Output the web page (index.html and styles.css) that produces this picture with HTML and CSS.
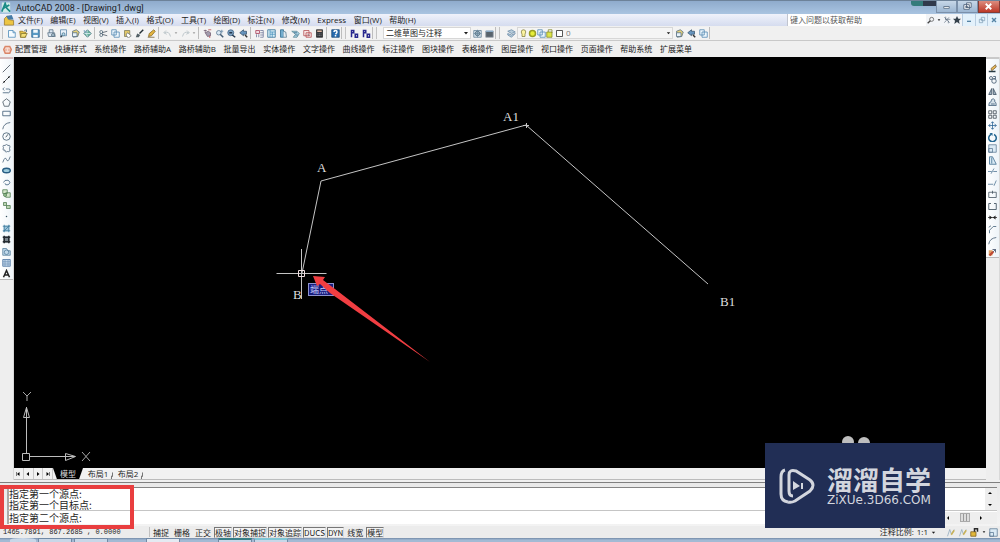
FILE: index.html
```html
<!DOCTYPE html>
<html lang="zh-CN">
<head>
<meta charset="utf-8">
<title>AutoCAD 2008 - [Drawing1.dwg]</title>
<link rel="stylesheet" href="styles.css">
</head>
<body>
<svg class="defs" aria-hidden="true">
  <symbol id="page" viewBox="0 0 12 12"><path d="M2 2h6l3 3v6H2z" fill="#f4fbff" stroke="#4685b5"/><path d="M8 2v3h3" fill="none" stroke="#4685b5"/></symbol>
  <symbol id="open" viewBox="0 0 12 12"><path d="M1 3h4l1 1h3v7H2z" fill="#e5c34a" stroke="#96761f"/><path d="M3 6h8l-3 5H2z" fill="#f4df77" stroke="#7c7130"/><path d="M7 2l3-1v3" fill="none" stroke="#385b76"/></symbol>
  <symbol id="save" viewBox="0 0 12 12"><path d="M1 1h10v10H1z" fill="#5b9bc5" stroke="#285f8c"/><path d="M3 1h6v4H3zM3 8h6v3H3z" fill="#f5f9fc"/></symbol>
  <symbol id="print" viewBox="0 0 12 12"><path d="M3 5V1h5v4M1 5h9l1 5H2z" fill="#dce7f2" stroke="#536b80"/><circle cx="8" cy="8" r="2" fill="#b1c9d9" stroke="#4d6474"/></symbol>
  <symbol id="preview" viewBox="0 0 12 12"><path d="M2 1h8v8H2z" fill="#eaf3fb" stroke="#5681a6"/><circle cx="6" cy="7" r="2" fill="#b5dced" stroke="#497089"/><path d="M4 9l-2 2" stroke="#323f4c" stroke-width="2"/></symbol>
  <symbol id="publish" viewBox="0 0 12 12"><path d="M2 3l5-2 4 3-2 6-6 1z" fill="#e5d078" stroke="#536b80"/><path d="M2 5h6v5H2z" fill="#e7f2fa" stroke="#536b80"/></symbol>
  <symbol id="globe" viewBox="0 0 12 12"><path d="M6 1l5 5-5 5-5-5z" fill="#68b19a" stroke="#477482"/><path d="M2 6h8M6 2q-3 4 0 8" fill="none" stroke="#e4f4fa"/><path d="M1 2l4 3" stroke="#83a8bf" stroke-width="2"/></symbol>
  <symbol id="cut" viewBox="0 0 12 12"><path d="M4 5l7-2M4 7l7 2" stroke="#45515d"/><circle cx="3" cy="4" r="2" fill="none" stroke="#496173"/><circle cx="3" cy="8" r="2" fill="none" stroke="#496173"/></symbol>
  <symbol id="copy" viewBox="0 0 12 12"><path d="M1 1h6v7H1zM4 4h7v7H4z" fill="#edf7fd" stroke="#4b83ad"/></symbol>
  <symbol id="paste" viewBox="0 0 12 12"><path d="M2 2h7v8H2z" fill="#e2c868" stroke="#7c7857"/><path d="M6 5l5 4-4 3-3-4z" fill="#fff" stroke="#6e7375"/></symbol>
  <symbol id="brush" viewBox="0 0 12 12"><path d="M6 6l5-5" stroke="#232f35" stroke-width="2"/><path d="M1 11l2-5 4 2-2 3z" fill="#536066"/></symbol>
  <symbol id="edit" viewBox="0 0 12 12"><path d="M2 10l1-4 6-5 2 2-5 6z" fill="#e4b43f" stroke="#816523"/><path d="M1 11h9" stroke="#705a2b"/></symbol>
  <symbol id="undo" viewBox="0 0 12 12"><path d="M4 2L1 5l4 2M2 5q6-3 8 5" fill="none" stroke="#aeb9bf"/></symbol>
  <symbol id="redo" viewBox="0 0 12 12"><path d="M8 2l3 3-4 2M10 5Q4 2 2 10" fill="none" stroke="#aeb9bf"/></symbol>
  <symbol id="down" viewBox="0 0 12 12"><path d="M2 4h8L6 9z" fill="currentColor"/></symbol>
  <symbol id="pan" viewBox="0 0 12 12"><path d="M1 2h4M3 1v4M3 5l3 5 4-1V5L7 3z" fill="#a29cad" stroke="#725c70"/><path d="M7 1h4M9 9v3" stroke="#bb4145"/></symbol>
  <symbol id="zoom" viewBox="0 0 12 12"><circle cx="5" cy="5" r="3" fill="#dbe9f4" stroke="#54718c"/><path d="M7 7l4 4" stroke="#455e74" stroke-width="2"/><path d="M9 1v5M7 3h4" stroke="#6488a5"/></symbol>
  <symbol id="zoomw" viewBox="0 0 12 12"><circle cx="5" cy="5" r="4" fill="#7fa4c4" stroke="#3c5f80"/><path d="M3 5h4M7 8l4 3" stroke="#26394c" stroke-width="2"/></symbol>
  <symbol id="zoomp" viewBox="0 0 12 12"><path d="M6 1L1 5l5 4V7h4V3H6z" fill="#6695bf" stroke="#36536c"/><path d="M8 8l3 3" stroke="#333" stroke-width="2"/></symbol>
  <symbol id="props" viewBox="0 0 12 12"><path d="M1 2h5v4H1z" fill="#f1dbe1" stroke="#a43852"/><path d="M2 7v4M5 7v4M7 2h4v9H7M7 5h4M7 8h4" fill="none" stroke="#6a7295"/></symbol>
  <symbol id="grid" viewBox="0 0 12 12"><path d="M1 1h10v10H1z" fill="#ddf1f8" stroke="#25658e"/><path d="M4 1v10M7 4v7M4 4h7M4 7h7" stroke="#438fba"/></symbol>
  <symbol id="palette" viewBox="0 0 12 12"><path d="M2 1h4v10H2z" fill="#73adce" stroke="#2a6a8e"/><path d="M6 3l3 1 1 7H6" fill="#e5edf2" stroke="#55788b"/></symbol>
  <symbol id="sheets" viewBox="0 0 12 12"><path d="M1 3h7l3 3-3 5H3l3-4z" fill="#a8cfdd" stroke="#578596"/><path d="M4 5h4M6 8h3" stroke="#38678b"/></symbol>
  <symbol id="markup" viewBox="0 0 12 12"><path d="M1 2h7v7H1zM4 5h7v6H4z" fill="#fae7e4" stroke="#b14a4d"/><path d="M6 7l3 2" stroke="#6d6574"/></symbol>
  <symbol id="calc" viewBox="0 0 12 12"><path d="M2 1h8v10H2z" fill="#35383d" stroke="#282828"/><path d="M3 3h6" stroke="#e1b8a2" stroke-width="2"/><path d="M4 6v4M6 6v4M8 6v4" stroke="#9b9b9b" stroke-dasharray="1"/></symbol>
  <symbol id="help" viewBox="0 0 12 12"><path d="M1 1h10v10H1z" fill="#286caf" stroke="#174777"/><path d="M4 4q0-2 2-2t2 2q0 1-2 3M6 8v2" fill="none" stroke="#fff" stroke-width="2"/></symbol>
  <symbol id="blocks" viewBox="0 0 12 12"><path d="M2 1v10M2 2h3v3H2M7 7h3v4H7z" fill="none" stroke="#26268d" stroke-width="2"/></symbol>
  <symbol id="gear" viewBox="0 0 12 12"><path d="M1 2h10v9H1z" fill="#d8e5ee" stroke="#5e7d94"/><circle cx="6" cy="6" r="3" fill="#9eb5c5" stroke="#405d70"/><path d="M6 1v10M1 6h10" stroke="#68879b"/></symbol>
  <symbol id="workspace" viewBox="0 0 12 12"><path d="M1 3h10v8H1z" fill="#58636c" stroke="#959ea5"/><path d="M1 3h10" stroke="#8babc7" stroke-width="2"/></symbol>
  <symbol id="layers" viewBox="0 0 12 12"><path d="M1 3l5-2 5 3-5 2zM1 6l5 2 5-2-5 5-5-3z" fill="#b7ccdb" stroke="#6788a6"/></symbol>
  <symbol id="bulb" viewBox="0 0 12 12"><path d="M4 7L3 4q0-3 3-3t3 3L8 7v3H4z" fill="#fbf3a0" stroke="#827c3d"/></symbol>
  <symbol id="sun" viewBox="0 0 12 12"><circle cx="6" cy="6" r="4" fill="#e5ed38" stroke="#9a9e25" stroke-width="2"/></symbol>
  <symbol id="lock" viewBox="0 0 12 12"><path d="M1 4h7v7H1z" fill="#dce449" stroke="#7e8329"/><path d="M3 4V1h5v4" fill="none" stroke="#7e8329"/></symbol>
  <symbol id="square" viewBox="0 0 12 12"><path d="M2 2h8v8H2z" fill="#fff" stroke="#222"/></symbol>
  <symbol id="line" viewBox="0 0 12 12"><path d="M1 11L11 1" stroke="#353f4b" stroke-width="1"/></symbol>
  <symbol id="xline" viewBox="0 0 12 12"><path d="M1 11L11 1" stroke="#20262c"/><circle cx="3" cy="9" r="1"/><circle cx="9" cy="3" r="1"/></symbol>
  <symbol id="pline" viewBox="0 0 12 12"><path d="M1 9h8q2-1 2-3t-2-2H5M3 2L1 4l2 2" fill="none" stroke="#385672"/></symbol>
  <symbol id="poly" viewBox="0 0 12 12"><path d="M6 1l5 4-2 6H3L1 5z" fill="none" stroke="#3f4d58"/></symbol>
  <symbol id="rect" viewBox="0 0 12 12"><path d="M1 3h10v6H1z" fill="none" stroke="#304f6b"/></symbol>
  <symbol id="arc" viewBox="0 0 12 12"><path d="M1 11q1-8 10-9" fill="none" stroke="#38516a"/></symbol>
  <symbol id="circle" viewBox="0 0 12 12"><circle cx="6" cy="6" r="5" fill="none" stroke="#365066"/><path d="M5 7l3-4" stroke="#263845"/></symbol>
  <symbol id="cloud" viewBox="0 0 12 12"><path d="M2 5Q0 1 4 2q2-3 4 0 4-1 2 4 2 5-3 4-3 2-3-2-4 1-2-3" fill="none" stroke="#405972"/></symbol>
  <symbol id="spline" viewBox="0 0 12 12"><path d="M1 10Q4 1 6 6t5-4" fill="none" stroke="#405972"/></symbol>
  <symbol id="ellipse" viewBox="0 0 12 12"><ellipse cx="6" cy="6" rx="5" ry="3" fill="#9dcbdd" stroke="#285d83" stroke-width="2"/></symbol>
  <symbol id="earc" viewBox="0 0 12 12"><path d="M2 6q1-4 6-3 5 3 0 6-4 1-4-2" fill="none" stroke="#315675"/></symbol>
  <symbol id="insert" viewBox="0 0 12 12"><path d="M1 1h6v5H1zM5 5h6v6H5z" fill="#d5e7cc" stroke="#4c7a4e"/><circle cx="4" cy="8" r="2" fill="#9bc495" stroke="#4c7a4e"/></symbol>
  <symbol id="block" viewBox="0 0 12 12"><path d="M2 2h4v4H2zM6 6h5v4H6z" fill="#bed5b4" stroke="#4c7a4e"/></symbol>
  <symbol id="point" viewBox="0 0 12 12"><circle cx="6" cy="6" r="1" fill="#34505e"/></symbol>
  <symbol id="hatch" viewBox="0 0 12 12"><path d="M2 2h8v8H2z" fill="#9bc4db"/><path d="M3 1v10M9 1v10M1 3h10M1 9h10M2 10l8-8" stroke="#3c789a"/></symbol>
  <symbol id="gradient" viewBox="0 0 12 12"><path d="M2 2h8v8H2z" fill="#7b858c"/><path d="M3 1v10M9 1v10M1 3h10M1 9h10" stroke="#252b31" stroke-width="2"/></symbol>
  <symbol id="region" viewBox="0 0 12 12"><path d="M1 2h5l2 3h3v6H1z" fill="#c1d9ea" stroke="#527b99"/><circle cx="6" cy="7" r="3" fill="none" stroke="#527b99"/></symbol>
  <symbol id="table" viewBox="0 0 12 12"><path d="M1 2h10v9H1z" fill="#c6d9ec" stroke="#426b9b"/><path d="M1 5h10M1 8h10M4 2v9M8 2v9" stroke="#7395b8"/></symbol>
  <symbol id="letter" viewBox="0 0 12 12"><path d="M2 11L6 2l4 9M4 8h4" fill="none" stroke="#222" stroke-width="2"/></symbol>
  <symbol id="erase" viewBox="0 0 12 12"><path d="M4 6l6-5 1 3-6 5z" fill="#e7b957" stroke="#765c37"/><path d="M1 10h9" stroke="#263b45" stroke-width="2"/></symbol>
  <symbol id="copies" viewBox="0 0 12 12"><circle cx="4" cy="4" r="2" fill="none" stroke="#304a61"/><circle cx="8" cy="8" r="3" fill="none" stroke="#304a61"/><path d="M7 2h3v3H7" fill="none" stroke="#304a61"/></symbol>
  <symbol id="mirror" viewBox="0 0 12 12"><path d="M5 2v8H1zM7 2v8h4z" fill="#a3b5c2" stroke="#34485b"/></symbol>
  <symbol id="offset" viewBox="0 0 12 12"><path d="M1 10q0-5 3-5 0-4 3-4 3 1 2 4 2 0 2 5zM4 8h5" fill="#d4e0e8" stroke="#3b5975"/></symbol>
  <symbol id="array" viewBox="0 0 12 12"><path d="M1 1h4v4H1zM7 1h4v4H7zM1 7h4v4H1zM7 7h4v4H7z" fill="none" stroke="#37404b"/></symbol>
  <symbol id="move" viewBox="0 0 12 12"><path d="M6 1v10M1 6h10M4 3l2-2 2 2M4 9l2 2 2-2M3 4L1 6l2 2M9 4l2 2-2 2" fill="none" stroke="#245f91"/></symbol>
  <symbol id="rotate" viewBox="0 0 12 12"><path d="M8 2a5 5 0 1 1-4 0" fill="none" stroke="#246792" stroke-width="2"/><path d="M2 0h4v4z" fill="#246792"/></symbol>
  <symbol id="scale" viewBox="0 0 12 12"><path d="M1 1h10v10H1zM1 6h5v5H1z" fill="#dbeaf4" stroke="#5b7893"/></symbol>
  <symbol id="stretch" viewBox="0 0 12 12"><path d="M2 1h4l5 10H2zM5 2v8" fill="#d9eaf4" stroke="#35658a"/></symbol>
  <symbol id="trim" viewBox="0 0 12 12"><path d="M0 6h5M7 6h5M4 9l4-7" fill="none" stroke="#49708f"/></symbol>
  <symbol id="extend" viewBox="0 0 12 12"><path d="M0 7h7M8 9l3-7" fill="none" stroke="#49708f"/></symbol>
  <symbol id="breakpt" viewBox="0 0 12 12"><path d="M1 3h10v7H1zM6 1v4" fill="none" stroke="#3b4b58"/></symbol>
  <symbol id="break" viewBox="0 0 12 12"><path d="M4 2H1v8h10V2H8" fill="none" stroke="#283c4b"/></symbol>
  <symbol id="join" viewBox="0 0 12 12"><path d="M0 6h12M2 4l3 2-3 2M10 4L7 6l3 2" fill="#222" stroke="#222"/></symbol>
  <symbol id="chamfer" viewBox="0 0 12 12"><path d="M2 11V7l5-5h4M1 3l3-2" fill="none" stroke="#36566f"/></symbol>
  <symbol id="explode" viewBox="0 0 12 12"><path d="M1 3h5v7H1z" fill="#e2a165"/><path d="M4 8l6-6M6 2h4v4" stroke="#33415c" fill="none"/><path d="M2 10l5-5" stroke="#bd4933" stroke-width="3"/></symbol>
  <symbol id="star" viewBox="0 0 12 12"><path d="M6 0l2 4h4L9 7l1 5-4-3-4 3 1-5-3-3h4z" fill="#34404b"/></symbol>
  <symbol id="tools" viewBox="0 0 12 12"><path d="M2 2l8 8M2 10l7-8M3 5h8M4 1v4M8 7v4" stroke="#596a7c"/></symbol>
  <symbol id="app" viewBox="0 0 12 12"><path d="M1 0h10v12H1z" fill="#cfebe8"/><path d="M1 11L5 1l2 6 4 4M3 7l7-4" fill="none" stroke="#198b86" stroke-width="2"/></symbol>
  <symbol id="dwg" viewBox="0 0 12 12"><path d="M1 4l3-3 2 4 5 1v5H1z" fill="#edc543" stroke="#a5853a"/><path d="M3 1l6-1 2 5H5z" fill="#467ba6"/></symbol>
  <symbol id="unlock" viewBox="0 0 12 12"><path d="M1 5h7v6H1z" fill="#e1b73a" stroke="#795c1b"/><path d="M6 5V1h4v4" fill="none" stroke="#2b2b2b" stroke-width="2"/></symbol>
  <symbol id="annot" viewBox="0 0 12 12"><path d="M2 11l3-9 2 6 4-6" fill="none" stroke="#8da8bb"/><path d="M7 9l4-6" stroke="#c9b256" stroke-width="2"/></symbol>
</svg>

<div class="app">
  <header class="titlebar">
    <svg class="icon"><use href="#app"/></svg>
    <h1 class="title">AutoCAD 2008 - [Drawing1.dwg]</h1>
    <div class="recorder"></div>
    <div class="window-buttons">
      <button class="win" aria-label="最小化"><svg viewBox="0 0 20 12"><path d="M7 6h6v2H7z" fill="#fff" stroke="#63758b"/></svg></button>
      <button class="win" aria-label="还原"><svg viewBox="0 0 20 12"><path d="M9 2h5v5h-5zM6 4h6v5H6zM8 6h2v1H8z" fill="#fff" stroke="#52657d"/></svg></button>
      <button class="win close" aria-label="关闭"><svg viewBox="0 0 20 12"><path d="M7 3l6 6M13 3L7 9" stroke="#fff" stroke-width="2"/></svg></button>
    </div>
  </header>

  <div class="menubar">
    <svg class="icon"><use href="#dwg"/></svg>
    <nav class="menus">
      <button>文件(F)</button><button>编辑(E)</button><button>视图(V)</button><button>插入(I)</button><button>格式(O)</button><button>工具(T)</button><button>绘图(D)</button><button>标注(N)</button><button>修改(M)</button><button>Express</button><button>窗口(W)</button><button>帮助(H)</button>
    </nav>
    <input class="ask" type="text" placeholder="键入问题以获取帮助" aria-label="键入问题以获取帮助">
    <div class="help-tools">
      <button aria-label="搜索"><svg viewBox="0 0 12 12"><circle cx="7" cy="5" r="3" fill="none" stroke="#444"/><path d="M5 7l-4 4" stroke="#444" stroke-width="2"/></svg></button>
      <button class="narrow" aria-label="搜索选项"><svg><use href="#down"/></svg></button>
      <button aria-label="通讯中心"><svg><use href="#tools"/></svg></button>
      <button aria-label="收藏夹"><svg><use href="#star"/></svg></button>
    </div>
    <div class="doc-buttons">
      <button aria-label="最小化图形"><svg viewBox="0 0 12 12"><path d="M3 8h6" stroke="#5482a3" stroke-width="2"/></svg></button>
      <button aria-label="还原图形"><svg viewBox="0 0 12 12"><path d="M5 2h5v5H5zM2 5h5v5H2z" fill="none" stroke="#7a99b2"/></svg></button>
      <button aria-label="关闭图形"><svg viewBox="0 0 12 12"><path d="M3 3l6 6M9 3L3 9" stroke="#5482a3" stroke-width="2"/></svg></button>
    </div>
  </div>

  <div class="toolbars">
    <div class="bar standard">
      <div class="set"><button aria-label="新建"><svg><use href="#page"/></svg></button><button aria-label="打开"><svg><use href="#open"/></svg></button><button aria-label="保存"><svg><use href="#save"/></svg></button></div>
      <div class="set"><button aria-label="打印"><svg><use href="#print"/></svg></button><button aria-label="打印预览"><svg><use href="#preview"/></svg></button><button aria-label="发布"><svg><use href="#publish"/></svg></button><button aria-label="三维DWF"><svg><use href="#globe"/></svg></button></div>
      <div class="set"><button aria-label="剪切"><svg><use href="#cut"/></svg></button><button aria-label="复制"><svg><use href="#copy"/></svg></button><button aria-label="粘贴"><svg><use href="#paste"/></svg></button><button aria-label="特性匹配"><svg><use href="#brush"/></svg></button><button aria-label="块编辑器"><svg><use href="#edit"/></svg></button></div>
      <div class="set"><button aria-label="放弃"><svg><use href="#undo"/></svg></button><button class="narrow" aria-label="放弃列表"><svg><use href="#down"/></svg></button><button aria-label="重做"><svg><use href="#redo"/></svg></button><button class="narrow" aria-label="重做列表"><svg><use href="#down"/></svg></button></div>
      <div class="set"><button aria-label="实时平移"><svg><use href="#pan"/></svg></button><button aria-label="实时缩放"><svg><use href="#zoom"/></svg></button><button aria-label="窗口缩放"><svg><use href="#zoomw"/></svg></button><button aria-label="缩放上一个"><svg><use href="#zoomp"/></svg></button></div>
      <div class="set"><button aria-label="特性"><svg><use href="#props"/></svg></button><button aria-label="设计中心"><svg><use href="#grid"/></svg></button><button aria-label="工具选项板"><svg><use href="#palette"/></svg></button><button aria-label="图纸集"><svg><use href="#sheets"/></svg></button><button aria-label="标记集"><svg><use href="#markup"/></svg></button><button aria-label="计算器"><svg><use href="#calc"/></svg></button></div>
      <div class="set"><button aria-label="帮助"><svg><use href="#help"/></svg></button></div>
    </div>
    <div class="bar"><div class="set"><button aria-label="块一"><svg><use href="#blocks"/></svg></button><button aria-label="块二"><svg><use href="#blocks"/></svg></button></div></div>
    <div class="bar workspace">
      <div class="picker"><select aria-label="工作空间"><option>二维草图与注释</option></select><svg class="arrow"><use href="#down"/></svg></div>
      <button aria-label="工作空间设置"><svg><use href="#gear"/></svg></button><button aria-label="我的工作空间"><svg><use href="#workspace"/></svg></button>
    </div>
    <div class="bar layer">
      <button aria-label="图层特性"><svg><use href="#layers"/></svg></button>
      <div class="picker layer-picker"><span class="states"><svg><use href="#bulb"/></svg><svg><use href="#sun"/></svg><svg><use href="#copy"/></svg><svg><use href="#lock"/></svg><svg><use href="#square"/></svg></span><select aria-label="图层"><option>0</option></select><svg class="arrow"><use href="#down"/></svg></div>
      <button aria-label="置为当前图层"><svg><use href="#publish"/></svg></button><button aria-label="上一个图层"><svg><use href="#zoomp"/></svg></button><button aria-label="图层状态"><svg><use href="#copy"/></svg></button>
    </div>
  </div>

  <div class="custom">
    <svg class="cui" viewBox="0 0 12 12"><path d="M3 2h6l2 4-2 5H3L1 6z" fill="#f8ddd2" stroke="#da8668" stroke-width="2"/><path d="M4 5v3M8 5v3" stroke="#da8668"/></svg>
    <nav class="custom-menus">
      <button>配置管理</button><button>快捷样式</button><button>系统操作</button><button>路桥辅助A</button><button>路桥辅助B</button><button>批量导出</button><button>实体操作</button><button>文字操作</button><button>曲线操作</button><button>标注操作</button><button>图块操作</button><button>表格操作</button><button>图层操作</button><button>视口操作</button><button>页面操作</button><button>帮助系统</button><button>扩展菜单</button>
    </nav>
  </div>

  <main class="work">
    <aside class="side"><div class="tools">
      <button aria-label="直线"><svg><use href="#line"/></svg></button><button aria-label="构造线"><svg><use href="#xline"/></svg></button><button aria-label="多段线"><svg><use href="#pline"/></svg></button><button aria-label="正多边形"><svg><use href="#poly"/></svg></button><button aria-label="矩形"><svg><use href="#rect"/></svg></button><button aria-label="圆弧"><svg><use href="#arc"/></svg></button><button aria-label="圆"><svg><use href="#circle"/></svg></button><button aria-label="修订云线"><svg><use href="#cloud"/></svg></button><button aria-label="样条曲线"><svg><use href="#spline"/></svg></button><button aria-label="椭圆"><svg><use href="#ellipse"/></svg></button><button aria-label="椭圆弧"><svg><use href="#earc"/></svg></button><button aria-label="插入块"><svg><use href="#insert"/></svg></button><button aria-label="创建块"><svg><use href="#block"/></svg></button><button aria-label="点"><svg><use href="#point"/></svg></button><button aria-label="图案填充"><svg><use href="#hatch"/></svg></button><button aria-label="渐变色"><svg><use href="#gradient"/></svg></button><button aria-label="面域"><svg><use href="#region"/></svg></button><button aria-label="表格"><svg><use href="#table"/></svg></button><button aria-label="多行文字"><svg><use href="#letter"/></svg></button>
    </div></aside>

    <section class="drawing">
      <svg class="canvas" role="img" aria-label="图形区">
        <g fill="none" stroke="#c4c4c4">
          <path d="M288 216L307 124L512 68L694 227"/>
          <path d="M262.500 216.500h50M287.500 192v50M509 68.500h6M512.500 66v5"/>
          <path d="M284.500 213.500h6v6h-6z" stroke="#f1dfe1"/>
          <path d="M8.500 396.500h7v7h-7zM12.500 396v-46M16 399.500h45M12.500 350.500l-3 10h6zM61.500 399.500l-10-3v7z" stroke="#bdbdbd"/>
          <path d="M9 335l4 4l4-4M13 339v5M68 395l8 9M76 395l-8 9" stroke="#a8a8a8"/>
        </g>
        <g class="labels"><text x="303" y="115">A</text><text x="279" y="242">B</text><text x="489" y="64">A1</text><text x="706" y="249">B1</text></g>
        <rect x="294.500" y="226.500" width="25" height="12" fill="#171d7c" stroke="#8d92cd"/>
        <text class="snap" x="296" y="236">端点</text>
        <path d="M299 219l12 1-2 3 12 9 95 73-100-69-10-9-3 2z" fill="#f13e42"/>
        <g fill="#bebebe"><circle cx="834" cy="385" r="6"/><circle cx="850" cy="386" r="6"/></g>
      </svg>
      <div class="sheet-row">
        <div class="steps">
          <button aria-label="第一个"><svg viewBox="0 0 12 12"><path d="M9 2v8L4 6zM2 2h1v8H2z"/></svg></button><button aria-label="上一个"><svg viewBox="0 0 12 12"><path d="M8 2v8L3 6z"/></svg></button><button aria-label="下一个"><svg viewBox="0 0 12 12"><path d="M4 2v8l5-4z"/></svg></button><button aria-label="最后一个"><svg viewBox="0 0 12 12"><path d="M3 2v8l5-4zM9 2h1v8H9z"/></svg></button>
        </div>
        <div class="sheets"><button class="sheet active">模型</button><button class="sheet">布局1</button><button class="sheet">布局2</button></div>
      </div>
    </section>

    <aside class="side"><div class="tools modify">
      <button aria-label="删除"><svg><use href="#erase"/></svg></button><button aria-label="复制对象"><svg><use href="#copies"/></svg></button><button aria-label="镜像"><svg><use href="#mirror"/></svg></button><button aria-label="偏移"><svg><use href="#offset"/></svg></button><button aria-label="阵列"><svg><use href="#array"/></svg></button><button aria-label="移动"><svg><use href="#move"/></svg></button><button aria-label="旋转"><svg><use href="#rotate"/></svg></button><button aria-label="缩放"><svg><use href="#scale"/></svg></button><button aria-label="拉伸"><svg><use href="#stretch"/></svg></button><button aria-label="修剪"><svg><use href="#trim"/></svg></button><button aria-label="延伸"><svg><use href="#extend"/></svg></button><button aria-label="打断于点"><svg><use href="#breakpt"/></svg></button><button aria-label="打断"><svg><use href="#break"/></svg></button><button aria-label="合并"><svg><use href="#join"/></svg></button><button aria-label="倒角"><svg><use href="#chamfer"/></svg></button><button aria-label="圆角"><svg><use href="#arc"/></svg></button><button aria-label="分解"><svg><use href="#explode"/></svg></button>
    </div></aside>
  </main>

  <section class="command">
    <div class="history">
      <div class="log"><p>指定第一个源点:</p><p>指定第一个目标点:</p></div>
      <div class="vscroll"><svg viewBox="0 0 12 12"><path d="M2 8h8L6 4z"/></svg><svg viewBox="0 0 12 12"><path d="M2 4h8L6 8z"/></svg></div>
    </div>
    <div class="entry">
      <label for="cmd">指定第二个源点:</label><input id="cmd" type="text">
      <div class="hscroll"><svg viewBox="0 0 12 12"><path d="M8 2v8L4 6z"/></svg><span class="thumb"></span><svg viewBox="0 0 12 12"><path d="M4 2v8l4-4z"/></svg></div>
    </div>
    <div class="callout"></div>
  </section>

  <footer class="status">
    <output class="coords">1465.7891, 867.2685 , 0.0000</output>
    <div class="modes">
      <button>捕捉</button><button>栅格</button><button>正交</button><button class="on">极轴</button><button class="on">对象捕捉</button><button class="on">对象追踪</button><button class="on">DUCS</button><button class="on">DYN</button><button>线宽</button><button class="on">模型</button>
    </div>
    <div class="annotation">
      <span>注释比例:</span><button class="ratio">1:1<svg><use href="#down"/></svg></button>
      <button aria-label="注释可见性"><svg><use href="#annot"/></svg></button><button aria-label="自动缩放"><svg><use href="#annot"/></svg></button><button aria-label="工具栏锁定"><svg><use href="#unlock"/></svg></button><button class="narrow" aria-label="状态栏菜单"><svg><use href="#down"/></svg></button><button aria-label="全屏显示"><svg><use href="#scale"/></svg></button>
    </div>
  </footer>
  <div class="taskbar"><i class="task start"></i><i class="task"></i><i class="task"></i><i class="gap"></i><i class="task explorer"></i><i class="gap"></i><i class="task cad"></i><i class="task round"></i></div>

  <div class="brand">
    <svg class="mark" viewBox="0 0 36 38"><path d="M9 35Q2 34 2 27V10Q2 4 6 3" fill="none" stroke="#d3d6de" stroke-width="3"/><path d="M14 29q-4 0-4-5V8q0-6 7-4l14 9q6 5 0 11L16 34q-4 2-7 1" fill="none" stroke="#d3d6de" stroke-width="3"/><path d="M14 14l7 5-7 4z" fill="#d3d6de"/><path d="M23 16v6" stroke="#d3d6de" stroke-width="2"/></svg>
    <div class="words"><strong>溜溜自学</strong><span>ZiXUe.3D66.COM</span></div>
  </div>
</div>
</body>
</html>
```
FILE: styles.css
```css
* { box-sizing: border-box; }
body {
  margin: 0;
  background: #f0f0f0;
  color: #1c1c1c;
  font: 8px/12px "Open Sans", "Noto Sans CJK SC", sans-serif;
}
button, input, select {
  margin: 0;
  padding: 0;
  border: 0;
  background: none;
  color: inherit;
  font: inherit;
  white-space: nowrap;
}
svg { display: block; flex: none; width: 9px; height: 9px; }
p { margin: 0; }
.defs { position: absolute; width: 0; height: 0; }
.app { position: relative; display: flex; flex-direction: column; height: 100vh; overflow: hidden; }

.titlebar {
  display: flex;
  align-items: center;
  gap: 5px;
  height: 14px;
  padding-left: 1px;
  border-top: 1px solid #6d8299;
  background: linear-gradient(#8fabcc, #a9c4e1);
}
.titlebar .icon { width: 10px; height: 11px; }
.title { flex: 1; margin: 0; font: 400 9px/12px Roboto, sans-serif; }
.recorder { align-self: flex-start; width: 30px; height: 5px; border-left: 12px solid #347b7b; background: #30394c; border-radius: 0 0 3px 3px; }
.window-buttons { display: flex; align-self: flex-start; margin-left: -10px; }
.win { width: 21px; height: 12px; border: 1px solid #7b90aa; border-top: 0; background: linear-gradient(#c7d7e8, #9cb6d2); }
.win svg { width: 19px; height: 11px; }
.win.close { width: 22px; border-color: #823c36; background: linear-gradient(#dc8c7e, #bd3828); }

.menubar { display: flex; align-items: center; height: 12px; padding-left: 3px; background: linear-gradient(#eff2fb, #d5dcef); }
.menubar .icon { width: 12px; height: 11px; }
.menus { display: flex; justify-content: space-between; width: 398px; margin-left: 3px; }
.ask { width: 139px; height: 12px; margin-left: auto; padding: 0 2px; border-left: 1px solid #c1c5cf; background: #fff; }
.ask::placeholder { color: #555; opacity: 1; }
.help-tools { display: flex; align-items: center; width: 36px; height: 12px; background: #f2f4f7; }
.help-tools button { display: flex; justify-content: center; width: 10px; }
.help-tools svg { width: 8px; height: 8px; }
.help-tools .narrow svg, .narrow svg { width: 4px; height: 4px; }
.help-tools .narrow { width: 6px; align-items: center; }
.doc-buttons { display: flex; width: 38px; height: 12px; }
.doc-buttons button { display: flex; flex: 1; align-items: center; justify-content: center; border-left: 1px solid #b9cde0; background: #e3f1fb; }
.doc-buttons svg { width: 8px; height: 8px; }

.toolbars { display: flex; height: 15px; padding: 1px 0 1px 2px; border-bottom: 1px solid #c9c9c9; }
.bar { display: flex; align-items: center; padding-left: 2px; border-left: 1px solid #c3c3c3; border-right: 1px solid #bdbdbd; background: #f3f3f3; }
.bar + .bar { margin-left: 3px; }
.bar > button, .set button { display: flex; align-items: center; justify-content: center; width: 12px; height: 12px; }
.set { display: flex; }
.set + .set { margin-left: 1px; padding-left: 2px; border-left: 1px solid #bcbcbc; }
.set .narrow { width: 6px; color: #9a9a9a; }
.bar.workspace { padding-left: 6px; }
.bar.layer { padding-left: 5px; }
.picker { position: relative; display: flex; align-items: center; width: 88px; height: 12px; border: 1px solid #d7d7d7; background: #fff; }
.picker select { flex: 1; min-width: 0; height: 10px; padding-left: 2px; appearance: none; }
.picker .arrow { width: 6px; height: 6px; margin-right: 1px; }
.workspace .picker select { font-size: 8px; line-height: 10px; }
.layer-picker { width: 156px; background: #f5f5f5; }
.layer-picker .arrow { width: 5px; }
.layer-picker select { height: 12px; color: #777; }
.states { display: flex; margin-left: 1px; }

.custom { display: flex; align-items: center; height: 16px; padding-left: 3px; }
.cui { margin-right: 3px; }
.custom-menus { display: flex; justify-content: space-between; width: 677px; }

.work { display: flex; flex: 1; min-height: 0; }
.side { width: 14px; border-right: 1px solid #d9d9d9; background: #eee; }
.tools { display: flex; flex-direction: column; justify-content: space-between; height: 223px; padding: 4px 0 0 2px; border-top: 2px solid #d4b9b9; border-bottom: 1px solid #b9b9b9; background: linear-gradient(90deg, #fff, #eef4f8); }
.tools button { width: 10px; height: 10px; }
.modify { height: 201px; border-top-color: #c9c9c9; }
.drawing { display: flex; flex: 1; flex-direction: column; min-width: 0; }
.canvas { flex: 1; width: 100%; min-height: 0; background: #000; }
.labels { fill: #ddd; font: 13px "Liberation Serif", serif; }
.snap { fill: #c7cbff; font-size: 9px; }
.sheet-row { display: flex; height: 12px; border-bottom: 1px solid #bbb; background: #f1f1f1; }
.steps { display: flex; width: 39px; }
.steps button { width: 10px; border-right: 1px solid #c7c7c7; }
.steps svg { width: 6px; height: 6px; margin: auto; }
.sheets { display: flex; }
.sheet { width: 30px; background: linear-gradient(107deg, transparent 92%, #777 93%, #777 96%, transparent 97%); font-size: 8px; line-height: 11px; }
.sheet.active { width: 30px; clip-path: polygon(0 0, 100% 0, 87% 100%, 13% 100%); background: #000; color: #ddd; }

.command { position: relative; display: flex; flex-direction: column; height: 44px; margin-top: 2px; padding: 4px 3px 2px 7px; border-top: 1px solid #808080; font: 10px/11px "Noto Sans CJK SC", sans-serif; background: linear-gradient(#e9e9e9, #f3f3f3); }
.history { display: flex; height: 25px; border-top: 1px solid #858585; border-left: 2px solid #aaa; border-bottom: 1px solid #c5c5c5; background: #fff; }
.log { flex: 1; }
.vscroll { display: flex; flex-direction: column; justify-content: space-between; width: 12px; padding: 2px; background: #eee; }
.vscroll svg, .hscroll svg { width: 6px; height: 6px; }
.entry { display: flex; align-items: center; height: 13px; border-left: 2px solid #aaa; background: #fff; line-height: 12px; }
.entry input { flex: 1; min-width: 0; height: 12px; }
.hscroll { display: flex; align-items: center; justify-content: space-between; width: 52px; height: 12px; padding: 0 13px 0 0; background: #eee; }
.thumb { width: 10px; height: 9px; border: 1px solid #aaa; background: repeating-linear-gradient(90deg, #ddd 0 2px, #999 2px 3px); }
.callout { position: absolute; top: 2px; left: 0; width: 134px; height: 44px; border: 4px solid #e93e3f; }

.status { display: flex; align-items: center; height: 12px; padding: 0 2px; background: #ececec; }
.coords { width: 148px; padding-left: 1px; border-right: 1px solid #c1c1c1; font: 7px/10px "Liberation Mono", monospace; }
.modes { display: flex; gap: 1px; margin-left: 1px; }
.modes button { height: 11px; padding: 0 1px; border: 1px solid transparent; line-height: 9px; font-family: "Noto Sans CJK SC", sans-serif; }
.modes .on { border-color: #777 #ddd #ddd #777; background: #f4f4f4; padding: 0; }
.annotation { display: flex; align-items: center; gap: 3px; margin-left: auto; }
.annotation button { display: flex; align-items: center; }
.ratio svg { width: 5px; height: 5px; margin: 0 7px 0 3px; }
.taskbar { display: flex; flex: none; height: 4px; padding-left: 10px; background: linear-gradient(#748ba7, #a2bad4 50%); }
.task { width: 34px; margin-right: 2px; border: 1px solid #7189a5; border-bottom: 0; background: #c8d7e8; }
.start { width: 26px; border: 0; border-radius: 50% 50% 0 0; }
.gap { width: 36px; }
.explorer { background: #e4eaf2; }
.cad { border-top: 2px solid #377e86; }
.round { border-top: 2px solid #7fc5d5; }

.brand { position: absolute; right: 55px; bottom: 14px; display: flex; align-items: center; gap: 12px; width: 180px; height: 85px; padding-left: 14px; background: #212e55; color: #d3d6de; }
.mark { width: 36px; height: 38px; }
.words { display: flex; flex-direction: column; gap: 1px; }
.words strong { font: 700 26px/28px "Noto Sans CJK SC", sans-serif; }
.words span { font: 12px/12px "DejaVu Sans", sans-serif; }
```
